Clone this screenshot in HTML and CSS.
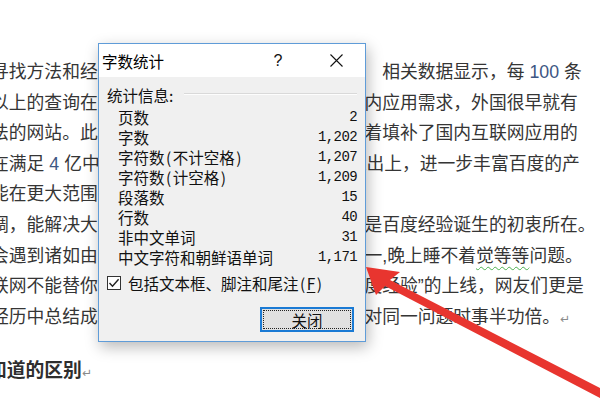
FILE: index.html
```html
<!DOCTYPE html>
<html lang="zh-CN">
<head>
<meta charset="utf-8">
<title>字数统计</title>
<link rel="stylesheet" href="styles.css">
</head>
<body>
<div class="doc">
<div class="ln">寻找方法和经验，帮助网友解决生活中各种问题　相关数据显示，每 <span class="num">100</span> 条</div>
<div class="ln">以上的查询在搜索引擎中无法得到答案，这是国内应用需求，外国很早就有</div>
<div class="ln">法的网站。此外，百度经验的正式推出，也意味着填补了国内互联网应用的</div>
<div class="ln">在满足 <span class="num">4</span> 亿中文网民搜索需求的同时，在产品推出上，进一步丰富百度的产</div>
<div class="ln">能在更大范围内满足用户的需求。</div>
<div class="ln">调，能解决大家在生活中遇到的实际问题，这正是百度经验诞生的初衷所在。</div>
<div class="ln">会遇到诸如由于工作压力过大，导致白天精力不一,晚上睡不着<span class="spell">觉等等</span>问题。</div>
<div class="ln">联网不能替你解决所有的问题，但随着新版的百度经验”的上线，网友们更是</div>
<div class="ln">经历中总结成经验分享给更多的人，使他人在面对同一问题时事半功倍。<span class="pm">↵</span></div>
<div class="ln heading">知道的区别<span class="pm">↵</span></div>
</div>

<div class="dialog">
  <div class="titlebar">
    <div class="title">字数统计</div>
    <div class="tbtn help">?</div>
    <div class="tbtn close">
      <svg width="13" height="13" viewBox="0 0 13 13"><path d="M0.5 0.5 L12.5 12.5 M12.5 0.5 L0.5 12.5" stroke="#111" stroke-width="1.1" fill="none"/></svg>
    </div>
  </div>
  <div class="body">
    <div class="group-head"><span>统计信息:</span><span class="rule"></span></div>
    <div class="stats">
      <div class="row"><span>页数</span><span class="val">2</span></div>
      <div class="row"><span>字数</span><span class="val">1,202</span></div>
      <div class="row"><span>字符数<span class="pr">(</span>不计空格<span class="pr">)</span></span><span class="val">1,207</span></div>
      <div class="row"><span>字符数<span class="pr">(</span>计空格<span class="pr">)</span></span><span class="val">1,209</span></div>
      <div class="row"><span>段落数</span><span class="val">15</span></div>
      <div class="row"><span>行数</span><span class="val">40</span></div>
      <div class="row"><span>非中文单词</span><span class="val">31</span></div>
      <div class="row"><span>中文字符和朝鲜语单词</span><span class="val">1,171</span></div>
    </div>
    <div class="check-row">
      <span class="box"><svg width="12" height="12" viewBox="0 0 12 12"><path d="M1.5 6 L4.5 9.2 L10.6 2.2" stroke="#222" stroke-width="1.4" fill="none"/></svg></span>
      <span>包括文本框、脚注和尾注<span class="pr">(</span><span class="ul">F</span><span class="pr">)</span></span>
    </div>
    <div class="footer">
      <div class="btn"><div class="btn-inner">关闭</div></div>
    </div>
  </div>
</div>

<svg class="arrow" width="600" height="398" viewBox="0 0 600 398">
  <polygon points="366,267 400,272 390,280 602,389 602,399 385,286 376,295" fill="#e8352f"/>
</svg>
</body>
</html>
```

FILE: styles.css
```css
html, body {
  margin: 0;
  padding: 0;
}

body {
  width: 600px;
  height: 398px;
  overflow: hidden;
  position: relative;
  background: #fff;
  font-family: "Liberation Sans", "Noto Sans CJK SC", sans-serif;
}

.doc {
  padding-top: 57px;
  margin-left: -9px;
  font-size: 17.8px;
  line-height: 30.6px;
  color: #353535;
  text-autospace: no-autospace;
  text-spacing-trim: space-all;
}

.ln {
  white-space: pre;
  height: 30.6px;
}

.num {
  color: #3d5683;
}

.spell {
  text-decoration: underline wavy #4caf50;
  text-decoration-thickness: 1px;
  text-underline-offset: 4px;
}

.pm {
  font-family: "DejaVu Sans", sans-serif;
  font-size: 12px;
  font-weight: normal;
  color: #8a8a8a;
}

.heading {
  margin-top: 24px;
  margin-left: -3px;
  font-size: 18.8px;
  font-weight: bold;
  color: #2e2e2e;
}

.dialog {
  position: absolute;
  left: 98px;
  top: 43px;
  width: 268px;
  height: 299px;
  box-sizing: border-box;
  border: 1px solid #5f9cd8;
  background: #f0f0f0;
  box-shadow: 2px 5px 14px rgba(0, 0, 0, 0.28);
  display: flex;
  flex-direction: column;
  font-family: "Noto Sans CJK SC", sans-serif;
  font-size: 15.5px;
  color: #111;
}

.titlebar {
  height: 33px;
  background: #fff;
  display: flex;
  align-items: center;
}

.title {
  flex: 1;
  padding-left: 3px;
  line-height: 20px;
  color: #000;
}

.tbtn {
  width: 58px;
  height: 33px;
  display: flex;
  align-items: center;
  justify-content: center;
}

.help {
  font-family: "Liberation Sans", sans-serif;
  font-size: 16px;
  color: #111;
}

.close svg {
  display: block;
}

.body {
  flex: 1;
  padding: 8px 8px 0 8px;
  display: flex;
  flex-direction: column;
}

.group-head {
  display: flex;
  align-items: center;
  height: 20px;
  line-height: 20px;
}

.rule {
  flex: 1;
  margin-left: 11px;
  margin-top: -3px;
  border-top: 1px solid #d9d9d9;
  border-bottom: 1px solid #fdfdfd;
}

.stats {
  margin-top: 2px;
  padding-left: 11px;
  display: flex;
  flex-direction: column;
}

.row {
  display: flex;
  justify-content: space-between;
  align-items: center;
  height: 20px;
  line-height: 20px;
}

.val {
  font-family: "Liberation Mono", monospace;
  font-size: 14px;
  letter-spacing: -0.6px;
  color: #111;
}

.pr {
  padding: 0 1.5px;
}

.ul {
  text-decoration: underline;
  text-underline-offset: 2px;
}

.check-row {
  margin-top: 6px;
  height: 20px;
  line-height: 20px;
  display: flex;
  align-items: center;
  gap: 7px;
}

.box {
  width: 14px;
  height: 14px;
  box-sizing: border-box;
  border: 1px solid #333;
  background: #fff;
  display: flex;
  align-items: center;
  justify-content: center;
}

.box svg {
  display: block;
}

.footer {
  margin-top: 14px;
  display: flex;
  justify-content: flex-end;
  padding-right: 3px;
}

.btn {
  width: 94px;
  height: 25px;
  box-sizing: border-box;
  border: 2px solid #1a7ad4;
  background: #e1e1e1;
  padding: 1px;
}

.btn-inner {
  height: 100%;
  box-sizing: border-box;
  border: 1px dotted #222;
  display: flex;
  align-items: center;
  justify-content: center;
  line-height: 18px;
}

.arrow {
  position: absolute;
  left: 0;
  top: 0;
  pointer-events: none;
}
```
